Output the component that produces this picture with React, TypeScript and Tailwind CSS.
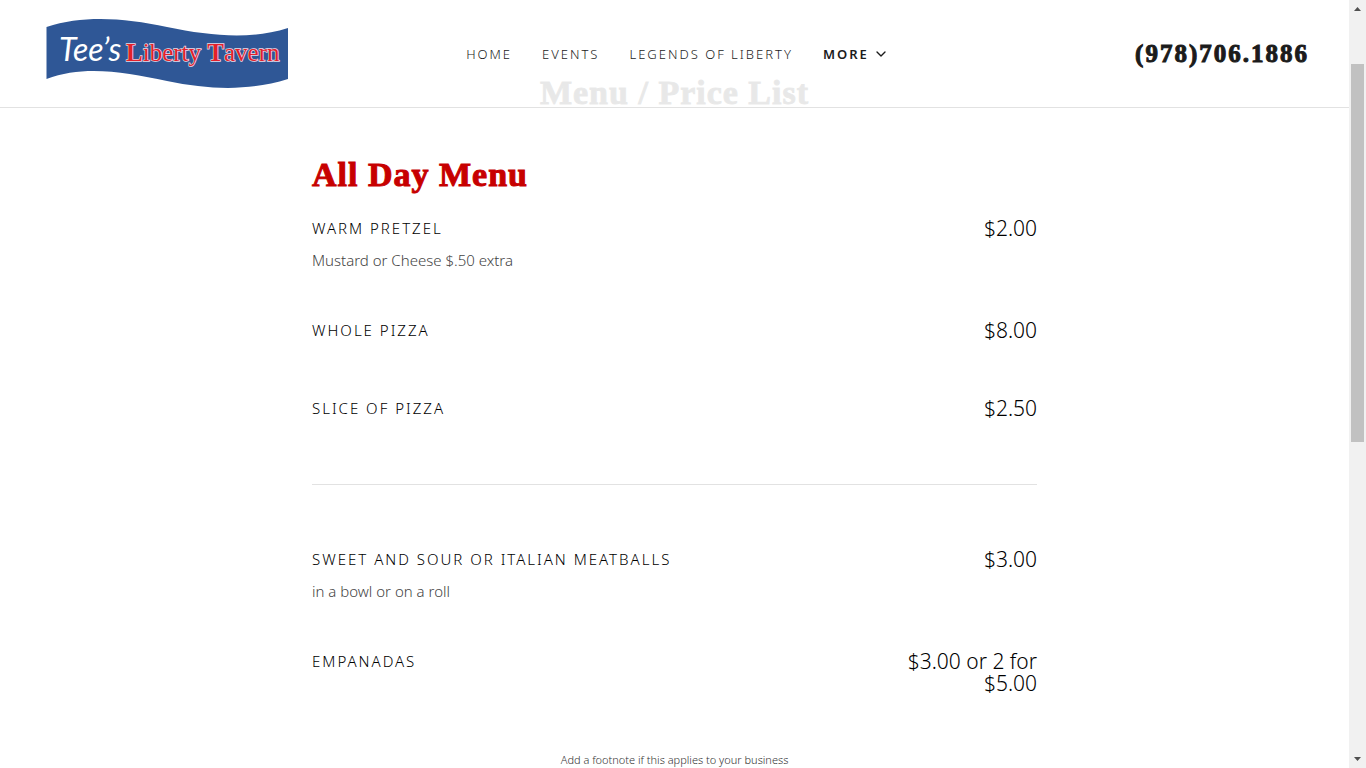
import { ChevronDown } from 'lucide-react';

interface MenuItem {
  name: string;
  price: string;
  description?: string;
}

const SNACKS: MenuItem[] = [
  { name: 'Warm Pretzel', price: '$2.00', description: 'Mustard or Cheese $.50 extra' },
  { name: 'Whole Pizza', price: '$8.00' },
  { name: 'Slice of Pizza', price: '$2.50' },
];

const PLATES: MenuItem[] = [
  { name: 'Sweet and Sour or Italian Meatballs', price: '$3.00', description: 'in a bowl or on a roll' },
  { name: 'Empanadas', price: '$3.00 or 2 for $5.00' },
];

const NAV = ['Home', 'Events', 'Legends of Liberty'];

function Logo() {
  return (
    <svg className="w-[243px] h-[72px]" viewBox="0 0 243 72" role="img" aria-label="Tee's Liberty Tavern">
      <path
        d="M0.5 9 C38 -3 78 0 121 9 C165 18 204 22 242 10 V61 C204 73 164 72 121 63 C78 54 38 47 0.5 61 Z"
        fill="#2f5796"
      />
      <text x="13" y="43" fill="#fff" fontSize="32" fontStyle="italic" fontWeight="400" fontFamily="Lato, sans-serif">
        Tee’s
      </text>
      <text
        x="80" y="43"
        fill="#e3202b" stroke="#e6dbe8" strokeWidth="1.4" paintOrder="stroke"
        fontSize="25" fontFamily="'Liberation Serif', serif"
      >
        <tspan fontWeight="700">L</tspan>iberty <tspan fontWeight="700">T</tspan>avern
      </text>
    </svg>
  );
}

function Header() {
  return (
    <header className="absolute inset-x-0 top-0 z-10 grid grid-cols-[1fr_auto_1fr] items-center h-[108px] pl-[46px] pr-10 bg-white/90 border-b border-[#e2e2e2]">
      <a href="#home" className="justify-self-start"><Logo /></a>
      <nav className="flex items-center gap-[30px] text-[13px] leading-6 tracking-[2px] uppercase text-[#1b1b1b]">
        {NAV.map(label => (
          <a key={label} href="#" className="font-light">{label}</a>
        ))}
        <button className="flex items-center gap-1 font-semibold uppercase tracking-[2px]">
          More <ChevronDown className="w-4 h-4" />
        </button>
      </nav>
      <a href="tel:9787061886" className="justify-self-end font-['Liberation_Serif',serif] font-bold text-[25px] tracking-[2px] text-[#1b1b1b] [-webkit-text-stroke:1px]">
        (978)706.1886
      </a>
    </header>
  );
}

function MenuRow({ item }: { item: MenuItem }) {
  return (
    <li className="flex justify-between items-start pb-[47px]">
      <div>
        <h3 className="mb-[9px] text-[15px] leading-[22px] tracking-[2px] uppercase font-light text-black">{item.name}</h3>
        {item.description && <p className="text-[15px] leading-6 font-light text-[#444]">{item.description}</p>}
      </div>
      <p className="w-[140px] text-right text-[21px] leading-[22px] font-light text-black">{item.price}</p>
    </li>
  );
}

function Scrollbar() {
  return (
    <div className="flex flex-col items-center w-[17px] shrink-0 bg-[#f1f1f1]" aria-hidden="true">
      <svg className="w-[17px] h-[17px]" viewBox="0 0 17 17"><path d="M5 11 L8.5 7 L12 11 Z" fill="#505050" /></svg>
      <div className="w-[13px] h-[378px] mt-[47px] mb-auto bg-[#c1c1c1]" />
      <svg className="w-[17px] h-[17px]" viewBox="0 0 17 17"><path d="M5 6 L8.5 10 L12 6 Z" fill="#505050" /></svg>
    </div>
  );
}

export default function App() {
  return (
    <div className="flex h-screen overflow-hidden bg-white font-['Noto_Sans',sans-serif]">
      <div className="relative flex-1 overflow-hidden">
        <Header />
        <main className="max-w-[725px] mx-auto pt-[73px]">
          <h1 className="mb-[42px] text-center font-['Liberation_Serif',serif] font-bold text-[34px] leading-10 tracking-[1px] text-[#1b1b1b] [-webkit-text-stroke:1px]">
            Menu / Price List
          </h1>
          <h2 className="mb-[22px] font-['Liberation_Serif',serif] font-bold text-[34px] leading-10 tracking-[1px] text-[#c70000] [-webkit-text-stroke:1px]">
            All Day Menu
          </h2>
          <ul>
            {SNACKS.map(item => <MenuRow key={item.name} item={item} />)}
          </ul>
          <hr className="mt-[9px] mb-[63px] border-[#e2e2e2]" />
          <ul>
            {PLATES.map(item => <MenuRow key={item.name} item={item} />)}
          </ul>
          <p className="mt-[9px] text-center text-[11px] leading-5 font-light text-[#333]">
            Add a footnote if this applies to your business
          </p>
        </main>
      </div>
      <Scrollbar />
    </div>
  );
}
